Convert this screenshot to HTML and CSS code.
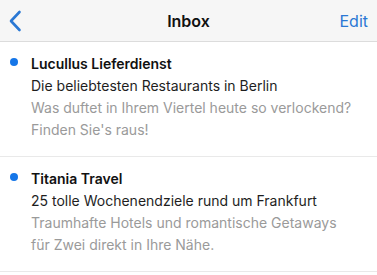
FILE: index.html
```html
<!DOCTYPE html>
<html lang="en">
<head>
    <meta charset="UTF-8">
    <meta name="viewport" content="width=device-width, initial-scale=1.0">
    <title>Inbox</title>
    <link rel="stylesheet" href="styles.css">
</head>
<body>

<header class="navbar">
    <button class="back" aria-label="Back">
        <svg width="14" height="22" viewBox="0 0 14 22">
            <path d="M11.5 2 L3 11 L11.5 20" fill="none" stroke="#2a78d4" stroke-width="2.6" stroke-linecap="round" stroke-linejoin="round"/>
        </svg>
    </button>
    <div class="title">Inbox</div>
    <button class="edit">Edit</button>
</header>

<div class="list">
    <div class="mail unread">
        <span class="dot"></span>
        <div class="body">
            <div class="sender">Lucullus Lieferdienst</div>
            <div class="subject">Die beliebtesten Restaurants in Berlin</div>
            <div class="preview">Was duftet in Ihrem Viertel heute so verlockend? Finden Sie's raus!</div>
        </div>
    </div>
    <div class="mail unread">
        <span class="dot"></span>
        <div class="body">
            <div class="sender">Titania Travel</div>
            <div class="subject">25 tolle Wochenendziele rund um Frankfurt</div>
            <div class="preview">Traumhafte Hotels und romantische Getaways<br>für Zwei direkt in Ihre Nähe.</div>
        </div>
    </div>
</div>

</body>
</html>
```

FILE: styles.css
```css
body {
    font-family: 'Inter', 'Liberation Sans', sans-serif;
    margin: 0;
    padding: 0;
    background: #fff;
    color: #111;
    width: 377px;
    overflow: hidden;
}

.navbar {
    height: 41px;
    background-color: #f6f6f6;
    border-bottom: 1px solid #dcdcdc;
    display: flex;
    align-items: center;
    justify-content: space-between;
    padding: 0 9px 0 8px;
    position: relative;
}

.navbar button {
    background: none;
    border: none;
    padding: 0;
    font-family: inherit;
    cursor: pointer;
}

.back {
    display: flex;
    align-items: center;
    height: 22px;
}

.title {
    position: absolute;
    left: 0;
    right: 0;
    text-align: center;
    font-size: 16px;
    font-weight: 600;
    color: #111;
    pointer-events: none;
}

.edit {
    font-size: 16px;
    color: #2a78d4;
}

.mail {
    display: flex;
    padding: 11px 10px 15px 0;
    border-bottom: 1px solid #e9e9e9;
}

.dot {
    width: 8px;
    height: 8px;
    border-radius: 50%;
    margin: 5px 13px 0 10px;
    flex-shrink: 0;
}

.unread .dot {
    background-color: #1576e8;
}

.body {
    flex: 1;
    font-size: 14px;
    line-height: 22px;
}

.sender {
    font-weight: 600;
    color: #111;
}

.subject {
    color: #1e1e1e;
}

.preview {
    color: #9a9a9a;
}
```
